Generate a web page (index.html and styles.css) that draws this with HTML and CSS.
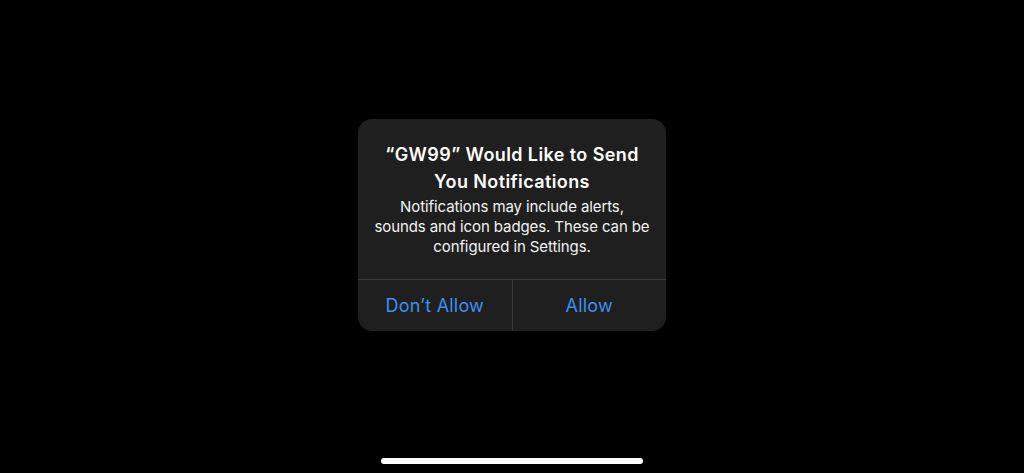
FILE: index.html
```html
<!DOCTYPE html>
<html lang="en">
<head>
<meta charset="utf-8">
<link rel="stylesheet" href="styles.css">
</head>
<body>
<div class="screen">
  <div class="alert">
    <div class="content">
      <div class="title">“GW99” Would Like to Send You Notifications</div>
      <div class="message">Notifications may include alerts, sounds and icon badges. These can be configured in Settings.</div>
    </div>
    <div class="actions">
      <div class="btn">Don’t Allow</div>
      <div class="btn">Allow</div>
    </div>
  </div>
  <div class="home-bar"></div>
</div>
</body>
</html>
```
FILE: styles.css
```css
html, body {
  margin: 0;
  padding: 0;
  background: #000;
}
.screen {
  width: 1024px;
  height: 473px;
  position: relative;
  display: flex;
  flex-direction: column;
  align-items: center;
  font-family: Inter, "Noto Sans", sans-serif;
  -webkit-font-smoothing: antialiased;
}
.alert {
  margin-top: 119px;
  width: 308px;
  background: #1f1f1f;
  border-radius: 14px;
  overflow: hidden;
}
.content {
  padding: 22px 16px 22px;
  text-align: center;
}
.title {
  color: #fff;
  font-size: 18px;
  font-weight: 600;
  line-height: 27px;
  letter-spacing: 0.4px;
}
.message {
  color: #f2f2f2;
  font-size: 15px;
  line-height: 20px;
  margin-top: 2px;
  letter-spacing: -0.1px;
}
.actions {
  display: flex;
  border-top: 1px solid #3a3a3a;
  height: 51px;
}
.btn {
  flex: 1;
  display: flex;
  align-items: center;
  justify-content: center;
  color: #3d8ff2;
  font-size: 18px;
  letter-spacing: 0.2px;
}
.btn + .btn {
  border-left: 1px solid #3a3a3a;
}
.home-bar {
  position: absolute;
  left: 381px;
  top: 458px;
  width: 262px;
  height: 6px;
  border-radius: 3px;
  background: #fff;
}
```
